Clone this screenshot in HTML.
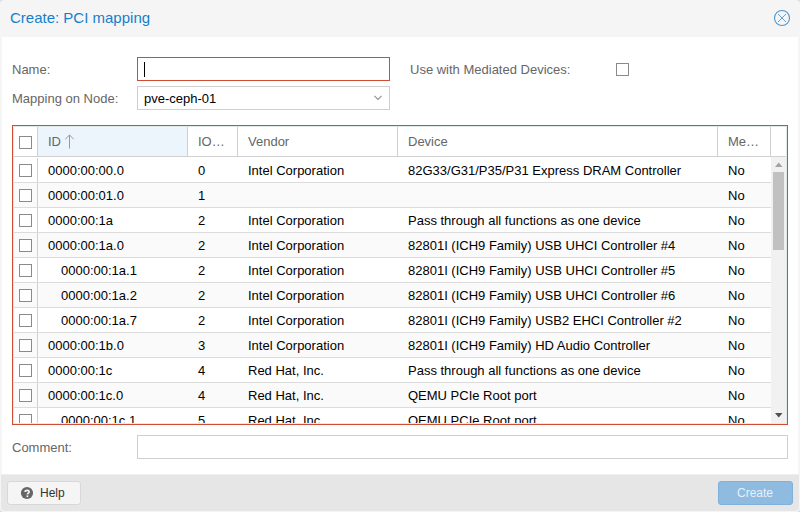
<!DOCTYPE html>
<html><head><meta charset="utf-8">
<style>
*{box-sizing:border-box;margin:0;padding:0}
html,body{width:800px;height:512px;overflow:hidden;background:#dcdcdc}
body{font-family:"Liberation Sans",sans-serif;font-size:13px;color:#404040;position:relative}
.a{position:absolute}
#win{left:0;top:0;width:800px;height:512px;background:#f5f5f5;border-radius:4px}
#title{left:10px;top:9px;font-size:15px;line-height:17px;color:#157fcc;white-space:nowrap}
#body{left:2px;top:37px;width:796px;height:437px;background:#fff}
#foot{left:1px;top:474px;width:798px;height:37px;background:#e6e6e6;border-top:1px solid #efefef;border-radius:0 0 4px 4px}
.lbl{color:#666;font-size:13px;line-height:17px;white-space:nowrap}
.fld{background:#fff;border:1px solid #cfcfcf}
.inv{border-color:#cf4c35}
.cb{width:13px;height:13px;border:1px solid #8a8a8a;background:#fff}
#grid{left:12px;top:125px;width:776px;height:300px;border:1px solid #cf4c35;background:#fff;overflow:hidden}
#gin{left:0;top:0;width:774px;height:298px;border:1px solid #e1e9eb;overflow:hidden}
.hd{top:0;height:30px;border-bottom:1px solid #d0d0d0;border-right:1px solid #d0d0d0;background:#fff}
.ht{color:#666;font-size:13px;line-height:17px;white-space:nowrap;top:6px}
.row{left:0;width:757px;height:25px;border-top:1px solid #dcdcdc}
.alt{background:#fafafa}
.c{top:4px;font-size:13px;line-height:17px;color:#000;white-space:nowrap}
.vl{width:1px;background:#d0d0d0}
.btn{border-radius:3px;height:24px}
</style></head><body>
<div id="win" class="a"></div>
<div id="title" class="a">Create: PCI mapping</div>
<svg class="a" style="left:773px;top:9px" width="18" height="18" viewBox="0 0 18 18"><circle cx="9" cy="9" r="7.5" fill="none" stroke="#4f95cf" stroke-width="1.1"/><path d="M5 5L13 13M13 5L5 13" stroke="#5a9bd4" stroke-width="0.95"/></svg>
<div id="body" class="a"></div>
<div id="foot" class="a"></div>

<div class="a lbl" style="left:12px;top:61px">Name:</div>
<div class="a fld inv" style="left:137px;top:57px;width:253px;height:24px"></div>
<div class="a" style="left:144px;top:62px;width:1px;height:15px;background:#000"></div>
<div class="a lbl" style="left:12px;top:90px">Mapping on Node:</div>
<div class="a fld" style="left:137px;top:86px;width:253px;height:24px"></div>
<div class="a" style="left:144px;top:90px;line-height:17px;color:#000;white-space:nowrap">pve-ceph-01</div>
<svg class="a" style="left:372px;top:92px" width="12" height="10" viewBox="0 0 12 10"><path d="M2.4 3.8L6 7.4L9.6 3.8" fill="none" stroke="#959595" stroke-width="1.2"/></svg>
<div class="a lbl" style="left:410px;top:61px">Use with Mediated Devices:</div>
<div class="a cb" style="left:616px;top:63px"></div>

<div id="grid" class="a">
<div id="gin" class="a">
 <div class="a hd" style="left:0;width:24px"></div>
 <div class="a cb" style="left:5px;top:9px"></div>
 <div class="a hd" style="left:24px;width:150px;background:#ecf4fc"></div>
 <div class="a ht" style="left:34px">ID</div>
 <svg class="a" style="left:50px;top:6px" width="12" height="17" viewBox="0 0 12 17"><path d="M5.5 2V15.5M1.3 6.2L5.5 2L9.7 6.2" fill="none" stroke="#999" stroke-width="1"/></svg>
 <div class="a hd" style="left:174px;width:50px"></div>
 <div class="a ht" style="left:184px">IO…</div>
 <div class="a hd" style="left:224px;width:160px"></div>
 <div class="a ht" style="left:234px">Vendor</div>
 <div class="a hd" style="left:384px;width:320px"></div>
 <div class="a ht" style="left:394px">Device</div>
 <div class="a hd" style="left:704px;width:53px"></div>
 <div class="a ht" style="left:714px">Me…</div>
 <div class="a hd" style="left:757px;width:15px;border-right:0"></div>
 <div id="rows" class="a" style="left:0;top:30px;width:757px;height:266px;overflow:hidden">
<div class="a row" style="top:0px;border-top-color:#fff"><div class="a cb" style="left:5px;top:6px"></div><div class="a vl" style="left:23px;top:0;height:24px"></div><div class="a c" style="left:34px">0000:00:00.0</div><div class="a c" style="left:184px">0</div><div class="a c" style="left:234px">Intel Corporation</div><div class="a c" style="left:394px">82G33/G31/P35/P31 Express DRAM Controller</div><div class="a c" style="left:714px">No</div></div>
<div class="a row alt" style="top:25px"><div class="a cb" style="left:5px;top:6px"></div><div class="a vl" style="left:23px;top:0;height:24px"></div><div class="a c" style="left:34px">0000:00:01.0</div><div class="a c" style="left:184px">1</div><div class="a c" style="left:234px"></div><div class="a c" style="left:394px"></div><div class="a c" style="left:714px">No</div></div>
<div class="a row" style="top:50px"><div class="a cb" style="left:5px;top:6px"></div><div class="a vl" style="left:23px;top:0;height:24px"></div><div class="a c" style="left:34px">0000:00:1a</div><div class="a c" style="left:184px">2</div><div class="a c" style="left:234px">Intel Corporation</div><div class="a c" style="left:394px">Pass through all functions as one device</div><div class="a c" style="left:714px">No</div></div>
<div class="a row alt" style="top:75px"><div class="a cb" style="left:5px;top:6px"></div><div class="a vl" style="left:23px;top:0;height:24px"></div><div class="a c" style="left:34px">0000:00:1a.0</div><div class="a c" style="left:184px">2</div><div class="a c" style="left:234px">Intel Corporation</div><div class="a c" style="left:394px">82801I (ICH9 Family) USB UHCI Controller #4</div><div class="a c" style="left:714px">No</div></div>
<div class="a row" style="top:100px"><div class="a cb" style="left:5px;top:6px"></div><div class="a vl" style="left:23px;top:0;height:24px"></div><div class="a c" style="left:47px">0000:00:1a.1</div><div class="a c" style="left:184px">2</div><div class="a c" style="left:234px">Intel Corporation</div><div class="a c" style="left:394px">82801I (ICH9 Family) USB UHCI Controller #5</div><div class="a c" style="left:714px">No</div></div>
<div class="a row alt" style="top:125px"><div class="a cb" style="left:5px;top:6px"></div><div class="a vl" style="left:23px;top:0;height:24px"></div><div class="a c" style="left:47px">0000:00:1a.2</div><div class="a c" style="left:184px">2</div><div class="a c" style="left:234px">Intel Corporation</div><div class="a c" style="left:394px">82801I (ICH9 Family) USB UHCI Controller #6</div><div class="a c" style="left:714px">No</div></div>
<div class="a row" style="top:150px"><div class="a cb" style="left:5px;top:6px"></div><div class="a vl" style="left:23px;top:0;height:24px"></div><div class="a c" style="left:47px">0000:00:1a.7</div><div class="a c" style="left:184px">2</div><div class="a c" style="left:234px">Intel Corporation</div><div class="a c" style="left:394px">82801I (ICH9 Family) USB2 EHCI Controller #2</div><div class="a c" style="left:714px">No</div></div>
<div class="a row alt" style="top:175px"><div class="a cb" style="left:5px;top:6px"></div><div class="a vl" style="left:23px;top:0;height:24px"></div><div class="a c" style="left:34px">0000:00:1b.0</div><div class="a c" style="left:184px">3</div><div class="a c" style="left:234px">Intel Corporation</div><div class="a c" style="left:394px">82801I (ICH9 Family) HD Audio Controller</div><div class="a c" style="left:714px">No</div></div>
<div class="a row" style="top:200px"><div class="a cb" style="left:5px;top:6px"></div><div class="a vl" style="left:23px;top:0;height:24px"></div><div class="a c" style="left:34px">0000:00:1c</div><div class="a c" style="left:184px">4</div><div class="a c" style="left:234px">Red Hat, Inc.</div><div class="a c" style="left:394px">Pass through all functions as one device</div><div class="a c" style="left:714px">No</div></div>
<div class="a row alt" style="top:225px"><div class="a cb" style="left:5px;top:6px"></div><div class="a vl" style="left:23px;top:0;height:24px"></div><div class="a c" style="left:34px">0000:00:1c.0</div><div class="a c" style="left:184px">4</div><div class="a c" style="left:234px">Red Hat, Inc.</div><div class="a c" style="left:394px">QEMU PCIe Root port</div><div class="a c" style="left:714px">No</div></div>
<div class="a row" style="top:250px"><div class="a cb" style="left:5px;top:6px"></div><div class="a vl" style="left:23px;top:0;height:24px"></div><div class="a c" style="left:47px">0000:00:1c.1</div><div class="a c" style="left:184px">5</div><div class="a c" style="left:234px">Red Hat, Inc.</div><div class="a c" style="left:394px">QEMU PCIe Root port</div><div class="a c" style="left:714px">No</div></div>
 </div>
 <div class="a" style="left:757px;top:30px;width:15px;height:266px;background:#f1f1f1"></div>
 <svg class="a" style="left:757px;top:30px" width="15" height="266"><path d="M4 10L11.5 10L7.75 5.5Z" fill="#a3a3a3"/><rect x="2" y="15" width="11" height="78" fill="#c1c1c1"/><path d="M4 256L11.5 256L7.75 260.5Z" fill="#505050"/></svg>
</div>
</div>

<div class="a lbl" style="left:12px;top:439px">Comment:</div>
<div class="a fld" style="left:137px;top:435px;width:651px;height:24px"></div>

<div class="a btn" style="left:7px;top:481px;width:74px;border:1px solid #d8d8d8;background:#f5f5f5"></div>
<svg class="a" style="left:20px;top:486px" width="14" height="14" viewBox="0 0 14 14"><circle cx="7" cy="7" r="6.1" fill="#666"/><path d="M5.1 6.1C5.1 4.9 6 4.3 7.1 4.3C8.3 4.3 9.1 5 9.1 5.9C9.1 7.1 7.4 7.2 7.4 8.6" fill="none" stroke="#f4f4f4" stroke-width="1.7"/><rect x="6.5" y="9.4" width="1.8" height="1.7" fill="#f4f4f4"/></svg>
<div class="a" style="left:40px;top:485px;line-height:17px;font-size:12px;color:#333">Help</div>
<div class="a btn" style="left:718px;top:481px;width:75px;border:1px solid #7fb1dc;background:#8fbbe0"></div>
<div class="a" style="left:737px;top:485px;line-height:17px;font-size:12px;color:#e8f0f7">Create</div>
</body></html>
